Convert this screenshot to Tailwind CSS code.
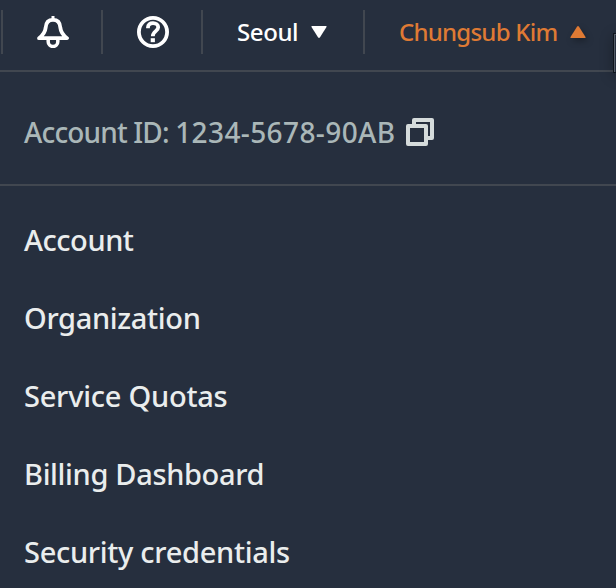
<!DOCTYPE html>
<html lang="en">
<head>
<meta charset="utf-8">
<title>Account menu</title>
<script src="https://cdn.jsdelivr.net/npm/@tailwindcss/browser@4"></script>
</head>
<body class="relative w-[616px] h-[588px] overflow-hidden bg-[#262f3e] font-['Noto_Sans','Open_Sans',sans-serif] font-medium">
<header class="flex h-[72px] pt-[10px] border-b-2 border-[#414750] text-white text-[24px] leading-[44px]">
  <div class="ml-px w-[100px] h-[44px] border-l-2 border-[#414750] flex items-center pl-[34px]">
    <svg class="w-8 h-8" viewBox="0 0 32 32" fill="none" stroke="currentColor" stroke-width="3.8" stroke-linejoin="round"><path d="M16 0v4" stroke-width="3"/><path d="M2 22.2C7 18.5 8.2 16 8.7 11.5C9 6.5 11.5 3.8 16 3.8s7 2.7 7.3 7.7C23.8 16 25 18.5 30 22.2Z"/><path d="M11.2 23v2.7a4.8 4.8 0 0 0 9.600 0V23" stroke-width="3.5"/></svg>
  </div>
  <div class="w-[100px] h-[44px] border-l-2 border-[#414750] flex items-center pl-[34px]">
    <svg class="w-8 h-8" viewBox="0 0 32 32" fill="none" stroke="currentColor"><circle cx="16" cy="16" r="14.100" stroke-width="3.8"/><path d="M11 12.300V11.300c0-2.700 2-4.100 5-4.100s5.200 1.600 5.200 4.100c0 4-5.400 3.800-5.400 9" stroke-width="3.800"/><path d="M15.800 22.200v4" stroke-width="4.200"/></svg>
  </div>
  <div class="w-[162px] h-[44px] border-l-2 border-[#414750] flex items-center pl-[34px]">
    <span class="w-[74px] whitespace-nowrap tracking-[-0.4px]">Seoul</span>
    <svg class="w-4 h-3" viewBox="0 0 16 12" fill="currentColor"><path d="M1 0h14q1 0 .5 1L9 11.300q-1 1.200-2 0L.5 1Q0 0 1 0Z"/></svg>
  </div>
  <div class="h-[44px] border-l-2 border-[#414750] flex items-center pl-[34px] text-[#df7a34]">
    <span class="w-[171px] whitespace-nowrap tracking-[-0.76px]">Chungsub Kim</span>
    <svg class="w-4 h-3 overflow-visible drop-shadow-[2px_3px_3px_rgba(0,0,0,0.3)]" viewBox="0 0 16 12" fill="currentColor"><path d="M1 12h14q1 0 .5-1L9 .7Q8-.5 7 .7L.5 11Q0 12 1 12Z"/></svg>
  </div>
</header>
<section class="flex items-center h-[114px] pt-[8px] pl-6 border-b-2 border-[#414750] text-[#aab7b8] text-[28px]">
  <span class="w-[382px] whitespace-nowrap"><span class="tracking-[-0.85px]">Account ID: </span><span class="tracking-[0.4px]">1234-5678-90AB</span></span>
  <svg class="w-7 h-7" viewBox="0 0 28 28" fill="none" stroke="#d5dbdb" stroke-width="4" stroke-linejoin="round"><path d="M8 8V2h18v18h-6"/><path d="M2 8h18v18H2Z"/></svg>
</section>
<nav class="flex flex-col pt-[15px] pl-6 text-[#eaeded] text-[29px] leading-[78px] whitespace-nowrap">
  <a class="tracking-[-0.45px]">Account</a>
  <a class="tracking-[-0.33px]">Organization</a>
  <a class="tracking-[-0.24px]">Service Quotas</a>
  <a class="tracking-[-0.34px]">Billing Dashboard</a>
  <a class="tracking-[-0.3px]">Security credentials</a>
</nav>
<div class="absolute left-[613px] top-[33px] w-[10px] h-[40px] bg-[#262f3e] border border-[#10151d] shadow-[inset_1px_1px_0_#555d68,0_3px_14px_rgba(0,0,0,0.3)]"></div>
</body>
</html>
